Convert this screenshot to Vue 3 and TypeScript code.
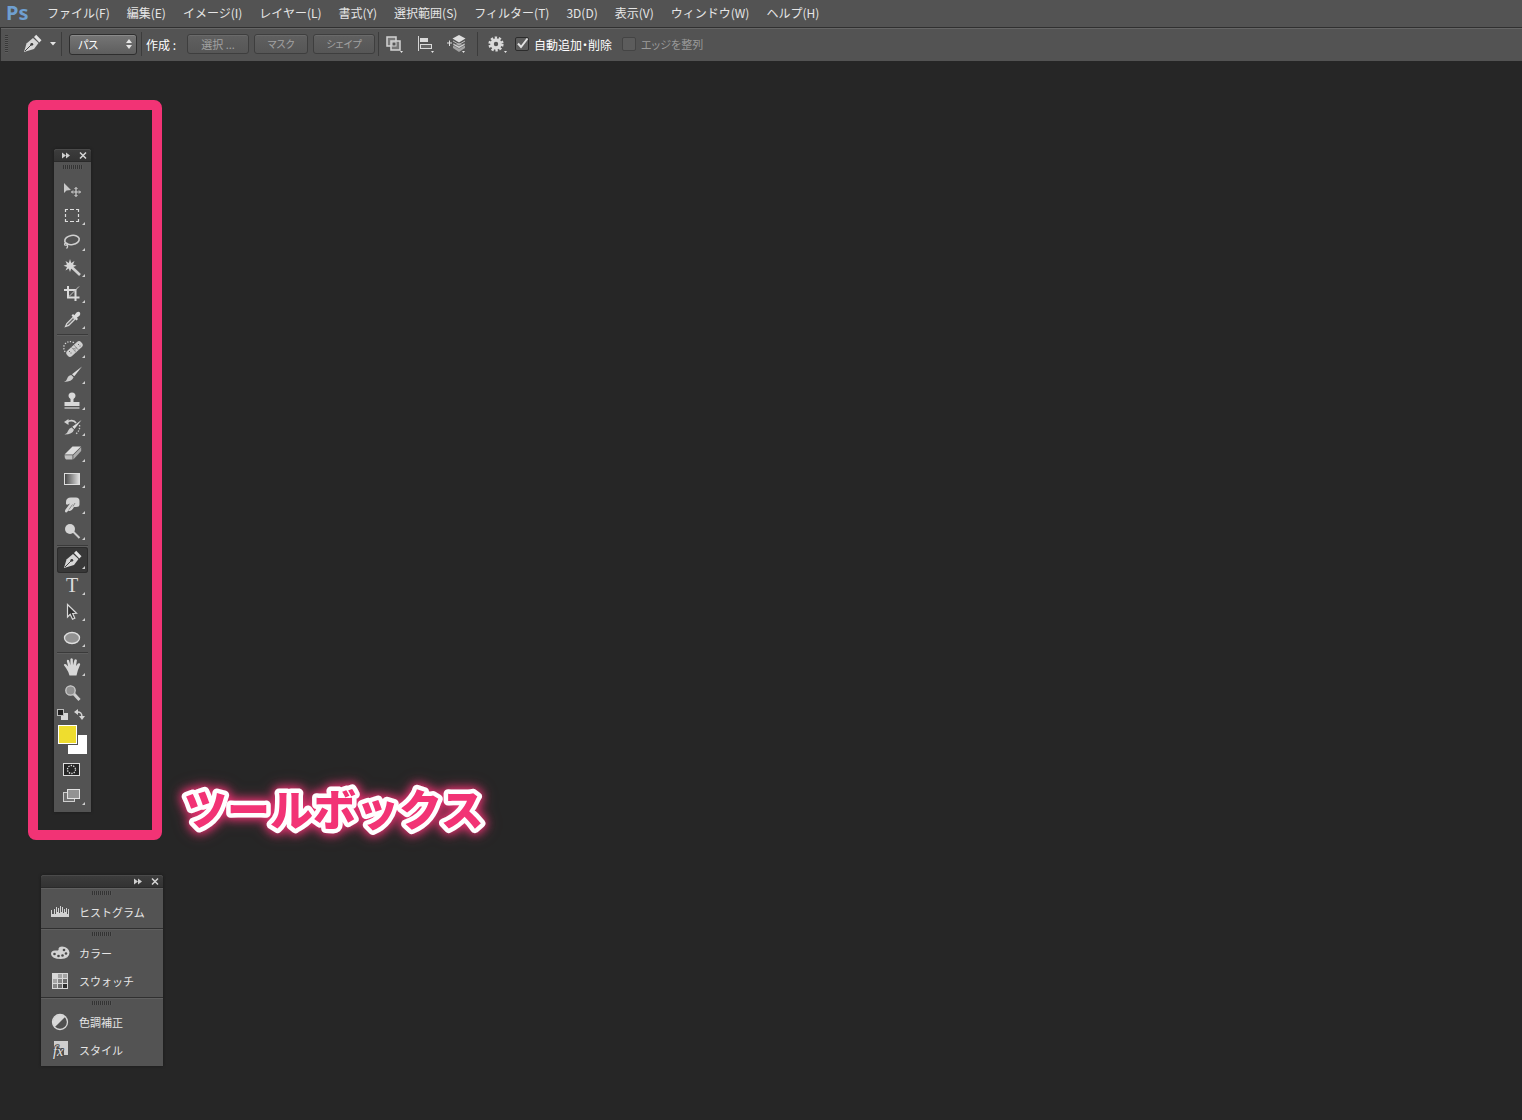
<script setup lang="ts">
import { ref } from 'vue'

interface Tool {
  name: string
  art: string
  flyout: boolean
}

interface PanelEntry {
  name: string
  art: string
}

const menus: string[] = [
  'ファイル(F)', '編集(E)', 'イメージ(I)', 'レイヤー(L)', '書式(Y)', '選択範囲(S)',
  'フィルター(T)', '3D(D)', '表示(V)', 'ウィンドウ(W)', 'ヘルプ(H)',
]

const penArt = `
  <path d="M7 21 L9.500 12.500 L16 7 L21.500 12 L17 18 Z" fill="#d6d6d6"/>
  <path d="M17 6 L19.200 3.800 L24.500 9.200 L22.300 11.400 Z" fill="#e4e4e4"/>
  <path d="M8 20 L14 14" stroke="#444" stroke-width="1"/>
  <circle cx="14.800" cy="13.300" r="1.400" fill="#3c3c3c"/>`

const groups: Tool[][] = [
  [
    { name: '移動ツール', flyout: false, art: `
      <path d="M7 6 L7 16 L9.500 13.500 L14 13 Z" fill="#c9c9c9"/>
      <path d="M19 10.500 V19.500 M14.500 15 H23.500" stroke="#d0d0d0" stroke-width="1.200"/>
      <path d="M17.500 12 L19 10.500 L20.500 12 M17.500 18 L19 19.500 L20.500 18 M16 13.500 L14.500 15 L16 16.500 M22 13.500 L23.500 15 L22 16.500" fill="none" stroke="#d0d0d0"/>` },
    { name: '長方形選択ツール', flyout: true, art: `
      <path d="M8.500 9 V6.500 H11 M13 6.500 H17 M19 6.500 H21.500 V9 M21.500 11 V14 M21.500 16 V18.500 H19 M17 18.500 H13 M11 18.500 H8.500 V16 M8.500 14 V11" fill="none" stroke="#dedede" stroke-width="1.200"/>` },
    { name: 'なげなわツール', flyout: true, art: `
      <ellipse cx="15" cy="11" rx="7.300" ry="4.600" transform="rotate(-10 15 11)" fill="none" stroke="#cfcfcf" stroke-width="1.600"/>
      <path d="M9 13.500 C6.500 14.500 7.500 17 9.500 16 C11.500 15 10 13.500 9 14.500 M10 16 C11.500 17.500 10.500 18.500 9.500 19.500" fill="none" stroke="#cfcfcf" stroke-width="1.200"/>` },
    { name: '自動選択ツール', flyout: true, art: `
      <path d="M13 10.500 L23 20" stroke="#cfcfcf" stroke-width="2.600"/>
      <path d="M13 4 L14.200 7.900 L17.500 6 L16 9.500 L19.500 10.700 L16 11.900 L17.500 15.500 L14.200 13.500 L13 17 L11.800 13.500 L8.500 15.500 L10 11.900 L6.500 10.700 L10 9.500 L8.500 6 L11.800 7.900 Z" fill="#d6d6d6"/>` },
    { name: '切り抜きツール', flyout: true, art: `
      <path d="M11 5 V16.500 H22.500 M7 9 H18.500 V20" fill="none" stroke="#dadada" stroke-width="2"/>
      <path d="M12 15.500 L22 5.500" stroke="#c4c4c4" stroke-width="1"/>` },
    { name: 'スポイトツール', flyout: true, art: `
      <path d="M8.500 19.500 L9.800 16.500 L16 10.300 L17.900 12.200 L11.700 18.400 Z" fill="#6a6a6a" stroke="#d6d6d6" stroke-width="1.200"/>
      <path d="M14.500 8.500 L16 7 L17.300 8.300 L19.500 5.500 Q21.500 4 22.800 5.300 Q24 7 22.500 8.700 L19.800 10.800 L21 12 L19.500 13.500 Z" fill="#dcdcdc"/>` },
  ],
  [
    { name: 'スポット修復ブラシツール', flyout: true, art: `
      <path d="M17 6.500 Q11 4 7.500 8.500 Q5.500 13 9 17" fill="none" stroke="#d4d4d4" stroke-width="1.300" stroke-dasharray="1.300 1.500"/>
      <rect x="8" y="9.500" width="19" height="7" rx="3" transform="rotate(-42 17.500 13)" fill="#cfcfcf"/>
      <path d="M14.400 11.300 L19 16.400 M16.900 9 L21.500 14" stroke="#888" stroke-width="0.800"/>
      <path d="M16.500 12.500 h1 M18.500 12 h1 M17.500 14 h1 M21 8.500 h1 M22.500 10 h1 M12 15.500 h1 M13.500 17 h1" stroke="#666" stroke-width="1"/>` },
    { name: 'ブラシツール', flyout: true, art: `
      <path d="M25 4.500 L15 12.300 L17.300 14.300 Z" fill="#dcdcdc"/>
      <path d="M14.200 13 L16.600 15.300 Q15 19.800 7 20 Q9.500 19 10 17 Q11 13.500 14.200 13 Z" fill="#cccccc"/>` },
    { name: 'コピースタンプツール', flyout: true, art: `
      <path d="M11.500 8 A3.500 3.500 0 1 1 18.500 8 Q18.500 9.500 16.500 11 V14 H22.500 V18 H7.500 V14 H13.500 V11 Q11.500 9.500 11.500 8 Z" fill="#d8d8d8"/>
      <path d="M7.500 20 H22.500" stroke="#d8d8d8" stroke-width="1.200"/>` },
    { name: 'ヒストリーブラシツール', flyout: true, art: `
      <path d="M7 8 L11.500 5 L11.500 11 Z" fill="#d2d2d2"/>
      <path d="M10 8 C13 6 17 6 19 9" fill="none" stroke="#d2d2d2" stroke-width="1.700"/>
      <path d="M24.500 6 L15.300 12.800 L17.500 15 Z" fill="#dcdcdc"/>
      <path d="M14.600 13.400 L17 15.800 Q15.500 20.500 7.500 20.500 Q10.500 19.500 11 17 Q12 13.900 14.600 13.400 Z" fill="#cccccc"/>
      <path d="M22.500 11 Q23.500 17 18 20.500" fill="none" stroke="#c8c8c8" stroke-width="1.400" stroke-dasharray="1.400 1.400"/>` },
    { name: '消しゴムツール', flyout: true, art: `
      <path d="M7.500 14.500 L15.500 6.500 H24 L16 14.500 Z" fill="#dedede"/>
      <path d="M7.500 15.300 H15.500 V19.500 H9 Q7.500 18.500 7.500 15.300 Z" fill="#c0c0c0"/>
      <path d="M16.300 15.200 L24.200 7.300 V11 L16.300 19.500 Z" fill="#acacac"/>` },
    { name: 'グラデーションツール', flyout: true, art: `
      <defs><linearGradient id="ramp"><stop offset="0" stop-color="#444"/><stop offset="1" stop-color="#e2e2e2"/></linearGradient></defs>
      <rect x="7.500" y="7.500" width="15" height="11" fill="url(#ramp)" stroke="#dedede"/>` },
    { name: '指先ツール', flyout: true, art: `
      <path d="M9 10 Q9 5.500 14 5.500 H19 Q22.500 5.500 22.500 9 V12.500 Q22.500 15 19 15 L17 15 Q14 20.500 11.500 18.500 L9.500 20.500 Q7 20.500 8.500 17.500 L13 11.500 Q10 13.500 9 12 Z" fill="#d4d4d4"/>
      <path d="M12 17.500 L15.500 12.500 M16 14.500 L18 11" stroke="#777" stroke-width="0.800"/>` },
    { name: '覆い焼きツール', flyout: true, art: `
      <path d="M15 12.500 L22.500 20" stroke="#cccccc" stroke-width="2"/>
      <circle cx="13" cy="11" r="5" fill="#d4d4d4"/>` },
  ],
  [
    { name: 'ペンツール', flyout: true, art: penArt },
    { name: '横書き文字ツール', flyout: true, art: `
      <text x="15" y="19" text-anchor="middle" font-family="Liberation Serif, serif" font-size="20" fill="#dcdcdc">T</text>` },
    { name: 'パスコンポーネント選択ツール', flyout: true, art: `
      <path d="M10.500 5.500 L10.500 18 L13.200 15.300 L15.500 20.200 L17.800 19.200 L15.700 14.500 L19.500 14.300 Z" fill="#333" stroke="#d8d8d8" stroke-width="1.200"/>` },
    { name: '楕円形ツール', flyout: true, art: `
      <ellipse cx="15" cy="13" rx="7.500" ry="5.500" fill="#929292" stroke="#dedede" stroke-width="1.300"/>` },
  ],
  [
    { name: '手のひらツール', flyout: true, art: `
      <path d="M9 14 L6.800 11 Q7.300 9.300 9 10.300 L11.200 12.500 L9.800 7 Q10.300 5 12 6.300 L13.400 11.200 L13.400 5 Q14.500 3.500 15.800 5 L16 11.200 L17.500 5.800 Q19 4.500 19.900 6.300 L19 12 L21 9.500 Q23.200 8.800 23.200 10.500 L20.800 16.500 L19.500 21.500 H12.500 Q12 18.500 9 14 Z" fill="#d8d8d8"/>` },
    { name: 'ズームツール', flyout: false, art: `
      <path d="M17 14 L22.500 20" stroke="#cfcfcf" stroke-width="3"/>
      <circle cx="13.500" cy="10.500" r="4.700" fill="#919191" stroke="#cdcdcd" stroke-width="1.300"/>` },
  ],
]

const panels: PanelEntry[][] = [
  [
    { name: 'ヒストグラム', art: `
      <path d="M1 15 V8 H2 V12 H4 V7 H5 V12 H6 V5 H7 V10 H8 V6 H9 V11 H10 V4 H11 V10 H12 V5 H13 V11 H14 V7 H15 V10 H16 V6 H17 V12 H18 V7 H19 V15 Z" fill="#d2d2d2"/>` },
  ],
  [
    { name: 'カラー', art: `
      <path d="M1 11 Q1 7.500 5 7.500 L8 7.500 Q9 7 8.500 5.500 Q9 3.500 12 3.500 Q18.500 4 19.500 9.500 Q19.500 15.500 11 16 Q1.500 16 1 11 Z" fill="#d2d2d2"/>
      <circle cx="4.500" cy="11" r="1.300" fill="#4a4a4a"/><circle cx="8.500" cy="13" r="1.300" fill="#4a4a4a"/>
      <circle cx="12.500" cy="12.500" r="1.300" fill="#4a4a4a"/><circle cx="16" cy="10.500" r="1.300" fill="#4a4a4a"/>
      <circle cx="14" cy="7" r="1.300" fill="#4a4a4a"/>` },
    { name: 'スウォッチ', art: `
      <rect x="2" y="2" width="16" height="16" fill="#d8d8d8"/>
      <path d="M8 3h4v4H8z M13 3h4v4h-4z M3 8h4v4H3z" fill="#a4a4a4"/>
      <path d="M8 8h4v4H8z M3 13h4v4H3z" fill="#858585"/>
      <path d="M13 8h4v4h-4z M8 13h4v4H8z" fill="#6c6c6c"/>
      <path d="M13 13h4v4h-4z" fill="#2e2e2e"/>` },
  ],
  [
    { name: '色調補正', art: `
      <circle cx="10" cy="10" r="7.500" fill="#505050" stroke="#d8d8d8" stroke-width="1.300"/>
      <path d="M15.300 4.700 A7.500 7.500 0 0 0 4.700 15.300 Z" fill="#d8d8d8"/>` },
    { name: 'スタイル', art: `
      <path d="M4 1 H18 V15 H14 V10 L9 9 L8 7 H6 L4 10 Z" fill="#cecece"/>
      <text x="3" y="16" font-family="Liberation Serif, serif" font-style="italic" font-size="14" fill="#e6e6e6" stroke="#4c4c4c" stroke-width="2" paint-order="stroke">fx</text>` },
  ],
]

const activeTool = ref('ペンツール')
const pathMode = ref('パス')
const autoAdd = ref(true)
const alignEdges = ref(false)
</script>

<template>
  <div class="app">
    <nav class="menubar">
      <span class="logo">Ps</span>
      <button v-for="menu in menus" :key="menu" type="button" class="menu">{{ menu }}</button>
    </nav>

    <header class="options">
      <span class="side-grip"></span>
      <button type="button" class="preset" aria-label="ツールプリセット">
        <svg width="24" height="24" viewBox="4 1 24 24" v-html="penArt"></svg>
        <svg width="6" height="4" viewBox="0 0 6 4"><path d="M0 0 H6 L3 3.500 Z" fill="#e4e4e4" /></svg>
      </button>
      <span class="rule"></span>
      <span class="mode">
        <select v-model="pathMode" aria-label="ツールモード">
          <option>パス</option>
          <option>シェイプ</option>
        </select>
        <svg width="6" height="10" viewBox="0 0 6 10"><path d="M0 4 L3 0 L6 4 Z M0 6 H6 L3 10 Z" fill="#e6e6e6" /></svg>
      </span>
      <span class="rule"></span>
      <span class="make">作成 :</span>
      <div class="makers">
        <button type="button" class="maker wide" disabled>選択 ...</button>
        <button type="button" class="maker kana" disabled>マスク</button>
        <button type="button" class="maker kana wide" disabled>シェイプ</button>
      </div>
      <span class="rule"></span>
      <div class="arrange">
        <button type="button" class="glyph" aria-label="パスの操作">
          <svg width="20" height="20" viewBox="0 0 20 20">
            <rect x="2" y="3" width="9" height="9" fill="#777" stroke="#d4d4d4" stroke-width="1.500" />
            <rect x="6" y="7" width="9" height="9" fill="#777" stroke="#d4d4d4" stroke-width="1.500" />
            <rect x="7" y="8" width="4" height="4" fill="#555" stroke="#d4d4d4" />
            <path d="M15 17 H18 L16.500 19 Z" fill="#e4e4e4" />
          </svg>
        </button>
        <button type="button" class="glyph" aria-label="パスの整列">
          <svg width="20" height="20" viewBox="0 0 20 20">
            <path d="M2.500 2 V17" stroke="#d4d4d4" />
            <rect x="4" y="4" width="8" height="4" fill="#dadada" />
            <rect x="4.500" y="10.500" width="11" height="4" fill="#666" stroke="#dadada" />
            <path d="M15 17 H18 L16.500 19 Z" fill="#e4e4e4" />
          </svg>
        </button>
        <button type="button" class="glyph" aria-label="パスの配置">
          <svg width="20" height="20" viewBox="0 0 20 20">
            <path d="M12 9 L18 12 V14 L12 18 L6 14 V12 Z" fill="#a2a2a2" />
            <path d="M6 9 L12 12 L18 9 V11 L12 14.500 L6 11 Z" fill="#d2d2d2" stroke="#555" stroke-width="0.600" />
            <path d="M12 1 L18.500 4.500 L12 8.500 L5.500 4.500 Z" fill="#dedede" />
            <path d="M6 7 L12 10.500 L18 7" fill="none" stroke="#bdbdbd" />
            <path d="M0 9 H5 M2.500 6.500 V12" stroke="#dedede" />
            <path d="M15 17 H18 L16.500 19 Z" fill="#e4e4e4" />
          </svg>
        </button>
      </div>
      <span class="rule"></span>
      <button type="button" class="glyph gear" aria-label="ペンのオプション">
        <svg width="22" height="20" viewBox="0 0 22 20">
          <circle cx="10" cy="10" r="4" fill="none" stroke="#dadada" stroke-width="3.600" />
          <circle cx="10" cy="10" r="6.300" fill="none" stroke="#dadada" stroke-width="2.600" stroke-dasharray="2.300 1.658" />
          <path d="M18 17 H21 L19.500 19 Z" fill="#e4e4e4" />
        </svg>
      </button>
      <label class="check">
        <span class="box">
          <input v-model="autoAdd" type="checkbox" />
          <svg v-if="autoAdd" width="14" height="14" viewBox="0 0 14 14"><path d="M3 6.500 L6 10 L12.500 1.500" fill="none" stroke="#e2e2e2" stroke-width="2" /></svg>
        </span>
        自動追加・削除
      </label>
      <label class="check off">
        <span class="box"><input v-model="alignEdges" type="checkbox" disabled /></span>
        エッジを整列
      </label>
    </header>

    <main class="workspace">
      <div class="frame"></div>

      <aside class="window toolbox" aria-label="ツールボックス">
        <div class="titlebar">
          <button type="button" aria-label="展開"><svg width="8" height="7" viewBox="0 0 8 7"><path d="M0 0.500 L4 3.500 L0 6.500 Z M4 0.500 L8 3.500 L4 6.500 Z" fill="#cfcfcf" /></svg></button>
          <button type="button" aria-label="閉じる"><svg width="8" height="7" viewBox="0 0 8 7"><path d="M1 0.500 L7 6.500 M7 0.500 L1 6.500" stroke="#d4d4d4" stroke-width="1.500" /></svg></button>
        </div>
        <span class="grip"></span>
        <div v-for="(group, g) in groups" :key="g" class="group">
          <button
            v-for="tool in group"
            :key="tool.name"
            type="button"
            class="tool"
            :class="{ active: tool.name === activeTool }"
            :aria-label="tool.name"
            @click="activeTool = tool.name"
          >
            <svg width="30" height="26" viewBox="0 0 30 26">
              <g v-html="tool.art"></g>
              <path v-if="tool.flyout" d="M28 19 V22 H25 Z" fill="#cfcfcf" />
            </svg>
          </button>
        </div>
        <div class="minis">
          <button type="button" aria-label="初期設定の描画色と背景色">
            <svg width="11" height="11" viewBox="0 0 11 11"><rect x="4" y="4" width="7" height="7" fill="#d6d6d6" /><rect x="0.500" y="0.500" width="6" height="6" fill="#222" stroke="#bcbcbc" /></svg>
          </button>
          <button type="button" aria-label="描画色と背景色を入れ替え">
            <svg width="11" height="11" viewBox="0 0 11 11"><path d="M3 3 Q8 2.500 8 8" fill="none" stroke="#d4d4d4" stroke-width="1.400" /><path d="M0 3 L4 0 V6 Z M5 7 H11 L8 11 Z" fill="#d4d4d4" /></svg>
          </button>
        </div>
        <div class="colors">
          <button type="button" class="chip back" aria-label="背景色"></button>
          <button type="button" class="chip fore" aria-label="描画色"></button>
        </div>
        <div class="views">
          <button type="button" class="tool" aria-label="クイックマスクモード">
            <svg width="30" height="26" viewBox="0 0 30 26">
              <rect x="6.500" y="7.500" width="16" height="12" fill="#262626" stroke="#dedede" />
              <circle cx="14.500" cy="13.500" r="4" fill="none" stroke="#e4e4e4" stroke-width="1.300" stroke-dasharray="1.300 1.210" />
            </svg>
          </button>
          <button type="button" class="tool" aria-label="スクリーンモード">
            <svg width="30" height="26" viewBox="0 0 30 26">
              <rect x="6.500" y="10.500" width="11" height="9" fill="#707070" stroke="#cfcfcf" />
              <rect x="10.500" y="7.500" width="12" height="9" fill="#929292" stroke="#e2e2e2" />
              <path d="M28 20 V23 H25 Z" fill="#cfcfcf" />
            </svg>
          </button>
        </div>
      </aside>

      <svg class="caption" width="340" height="80" viewBox="0 0 340 80">
        <text x="14" y="59">ツールボックス</text>
      </svg>

      <aside class="window dock" aria-label="パネル">
        <div class="titlebar">
          <button type="button" aria-label="展開"><svg width="8" height="7" viewBox="0 0 8 7"><path d="M0 0.500 L4 3.500 L0 6.500 Z M4 0.500 L8 3.500 L4 6.500 Z" fill="#cfcfcf" /></svg></button>
          <button type="button" aria-label="閉じる"><svg width="8" height="7" viewBox="0 0 8 7"><path d="M1 0.500 L7 6.500 M7 0.500 L1 6.500" stroke="#d4d4d4" stroke-width="1.500" /></svg></button>
        </div>
        <section v-for="(panel, p) in panels" :key="p" class="panel">
          <span class="grip"></span>
          <button v-for="entry in panel" :key="entry.name" type="button" class="entry">
            <svg width="20" height="20" viewBox="0 0 20 20" v-html="entry.art"></svg>
            {{ entry.name }}
          </button>
        </section>
      </aside>
    </main>
  </div>
</template>

<style>
body {
  margin: 0;
  background: #262626;
}
</style>

<style scoped>
.app {
  display: flex;
  flex-direction: column;
  min-height: 100vh;
  background: #262626;
  color: #e6e6e6;
  font-family: "Noto Sans CJK JP", sans-serif;
  font-size: 12px;
}

button {
  margin: 0;
  padding: 0;
  border: 0;
  background: none;
  color: inherit;
  font: inherit;
}

svg {
  display: block;
  flex: none;
}

.menubar {
  display: flex;
  align-items: center;
  gap: 17px;
  box-sizing: border-box;
  height: 27px;
  padding: 0 0 2px 6px;
  background: #535353;
}

.logo {
  width: 24px;
  color: #6f9fd0;
  font-family: "Noto Sans", sans-serif;
  font-size: 20px;
  font-weight: 700;
  line-height: 24px;
}

.menu {
  line-height: 24px;
  white-space: nowrap;
}

.options {
  display: flex;
  align-items: center;
  box-sizing: border-box;
  height: 34px;
  padding: 0 0 1px 4px;
  border-top: 1px solid #303030;
  border-left: 1px solid #303030;
  background: #535353;
  box-shadow: inset 0 1px #666;
  font-feature-settings: "palt";
  white-space: nowrap;
}

.side-grip {
  width: 3px;
  height: 18px;
  background: repeating-linear-gradient(#383838 0 1px, #5c5c5c 1px 2px);
}

.preset {
  display: flex;
  align-items: center;
  gap: 5px;
  margin: 0 5px 0 13px;
}

.rule {
  width: 1px;
  height: 24px;
  background: #3c3c3c;
}

.mode {
  display: grid;
  align-items: center;
  margin: 0 4px 0 7px;
}

.mode > * {
  grid-area: 1 / 1;
}

.mode select {
  box-sizing: border-box;
  width: 68px;
  height: 21px;
  padding: 0 8px;
  appearance: none;
  border: 1px solid #2e2e2e;
  border-radius: 3px;
  background: linear-gradient(#757575, #5e5e5e);
  box-shadow: inset 0 1px #8a8a8a;
  color: #fff;
  font: inherit;
  font-size: 11px;
  font-feature-settings: inherit;
}

.mode svg {
  justify-self: end;
  margin-right: 5px;
  pointer-events: none;
}

.make {
  width: 41px;
  margin-left: 4px;
  color: #fff;
}

.makers {
  display: flex;
  gap: 5px;
  margin-right: 3px;
}

.maker {
  box-sizing: border-box;
  width: 54px;
  height: 20px;
  border: 1px solid #3e3e3e;
  border-radius: 3px;
  background: linear-gradient(#606060, #565656);
  box-shadow: inset 0 1px #6a6a6a;
  color: #a2a2a2;
  font-size: 11px;
  font-feature-settings: inherit;
  line-height: 16px;
}

.maker.wide {
  width: 62px;
}

.maker.kana {
  font-size: 10px;
}

.arrange {
  display: flex;
  gap: 11px;
  margin: 0 10px 0 6px;
}

.gear {
  margin: 0 7px 0 8px;
}

.check {
  display: flex;
  align-items: center;
  gap: 5px;
  margin-right: 10px;
  color: #fff;
}

.check.off {
  color: #9a9a9a;
  font-size: 11px;
}

.box {
  display: grid;
}

.box > * {
  grid-area: 1 / 1;
}

.box input {
  box-sizing: border-box;
  width: 14px;
  height: 14px;
  margin: 0;
  appearance: none;
  border: 1px solid #2c2c2c;
  border-radius: 2px;
  background: #5c5c5c;
}

.box svg {
  pointer-events: none;
}

.off .box input {
  border-color: #444;
}

.workspace {
  position: relative;
  flex: 1;
  min-height: 1010px;
}

.frame {
  position: absolute;
  top: 39px;
  left: 28px;
  box-sizing: border-box;
  width: 134px;
  height: 740px;
  border: 10px solid #f23375;
  border-radius: 8px;
}

.window {
  position: absolute;
  border-radius: 3px 3px 0 0;
  background: #535353;
  box-shadow: 0 0 3px #1a1a1a;
}

.titlebar {
  display: flex;
  align-items: center;
  justify-content: flex-end;
  gap: 9px;
  box-sizing: border-box;
  height: 13px;
  padding-right: 4px;
  border-top: 1px solid #4a4a4a;
  border-bottom: 1px solid #2a2a2a;
  border-radius: 3px 3px 0 0;
  background: linear-gradient(#3c3c3c, #333);
}

.grip {
  display: block;
  width: 20px;
  height: 4px;
  margin: 0 auto;
  background: repeating-linear-gradient(90deg, #333 0 1px, #585858 1px 2px);
}

.toolbox {
  top: 88px;
  left: 54px;
  width: 37px;
  padding-bottom: 4px;
}

.toolbox > .grip {
  margin: 3px auto 8px;
}

.group,
.views {
  margin: 0 3px;
}

.group + .group {
  margin-top: 1px;
  border-top: 1px solid #3a3a3a;
  box-shadow: inset 0 1px #5e5e5e;
  padding-top: 1px;
}

.tool {
  display: block;
  width: 100%;
}

.tool.active {
  border-radius: 3px;
  background: #383838;
  box-shadow: inset 0 0 0 1px #2c2c2c;
}

.minis {
  display: flex;
  justify-content: space-between;
  padding: 3px 6px 5px 3px;
}

.colors {
  display: grid;
  width: 29px;
  height: 29px;
  margin: 0 4px 2px;
}

.chip {
  grid-area: 1 / 1;
  box-sizing: border-box;
  width: 19px;
  height: 19px;
  border: 1px solid #fff;
}

.back {
  place-self: end;
  background: #fff;
}

.fore {
  place-self: start;
  background: #efdd2e;
  outline: 1px solid #535353;
}

.caption {
  position: absolute;
  top: 706px;
  left: 170px;
  overflow: visible;
  fill: #f23375;
  stroke: #fff;
  stroke-width: 9px;
  stroke-linejoin: round;
  paint-order: stroke;
  font-size: 43px;
  font-weight: 900;
  filter: drop-shadow(0 0 5px #f23375) drop-shadow(0 0 6px #f23375a0);
}

.dock {
  top: 814px;
  left: 41px;
  width: 122px;
}

.panel {
  padding: 3px 0 2px;
  box-shadow: inset 0 1px #606060;
}

.panel + .panel {
  border-top: 1px solid #303030;
}

.panel .grip {
  margin-bottom: 3px;
}

.entry {
  display: flex;
  align-items: center;
  gap: 9px;
  width: 100%;
  height: 28px;
  padding-left: 9px;
  font-size: 11px;
  white-space: nowrap;
}
</style>
